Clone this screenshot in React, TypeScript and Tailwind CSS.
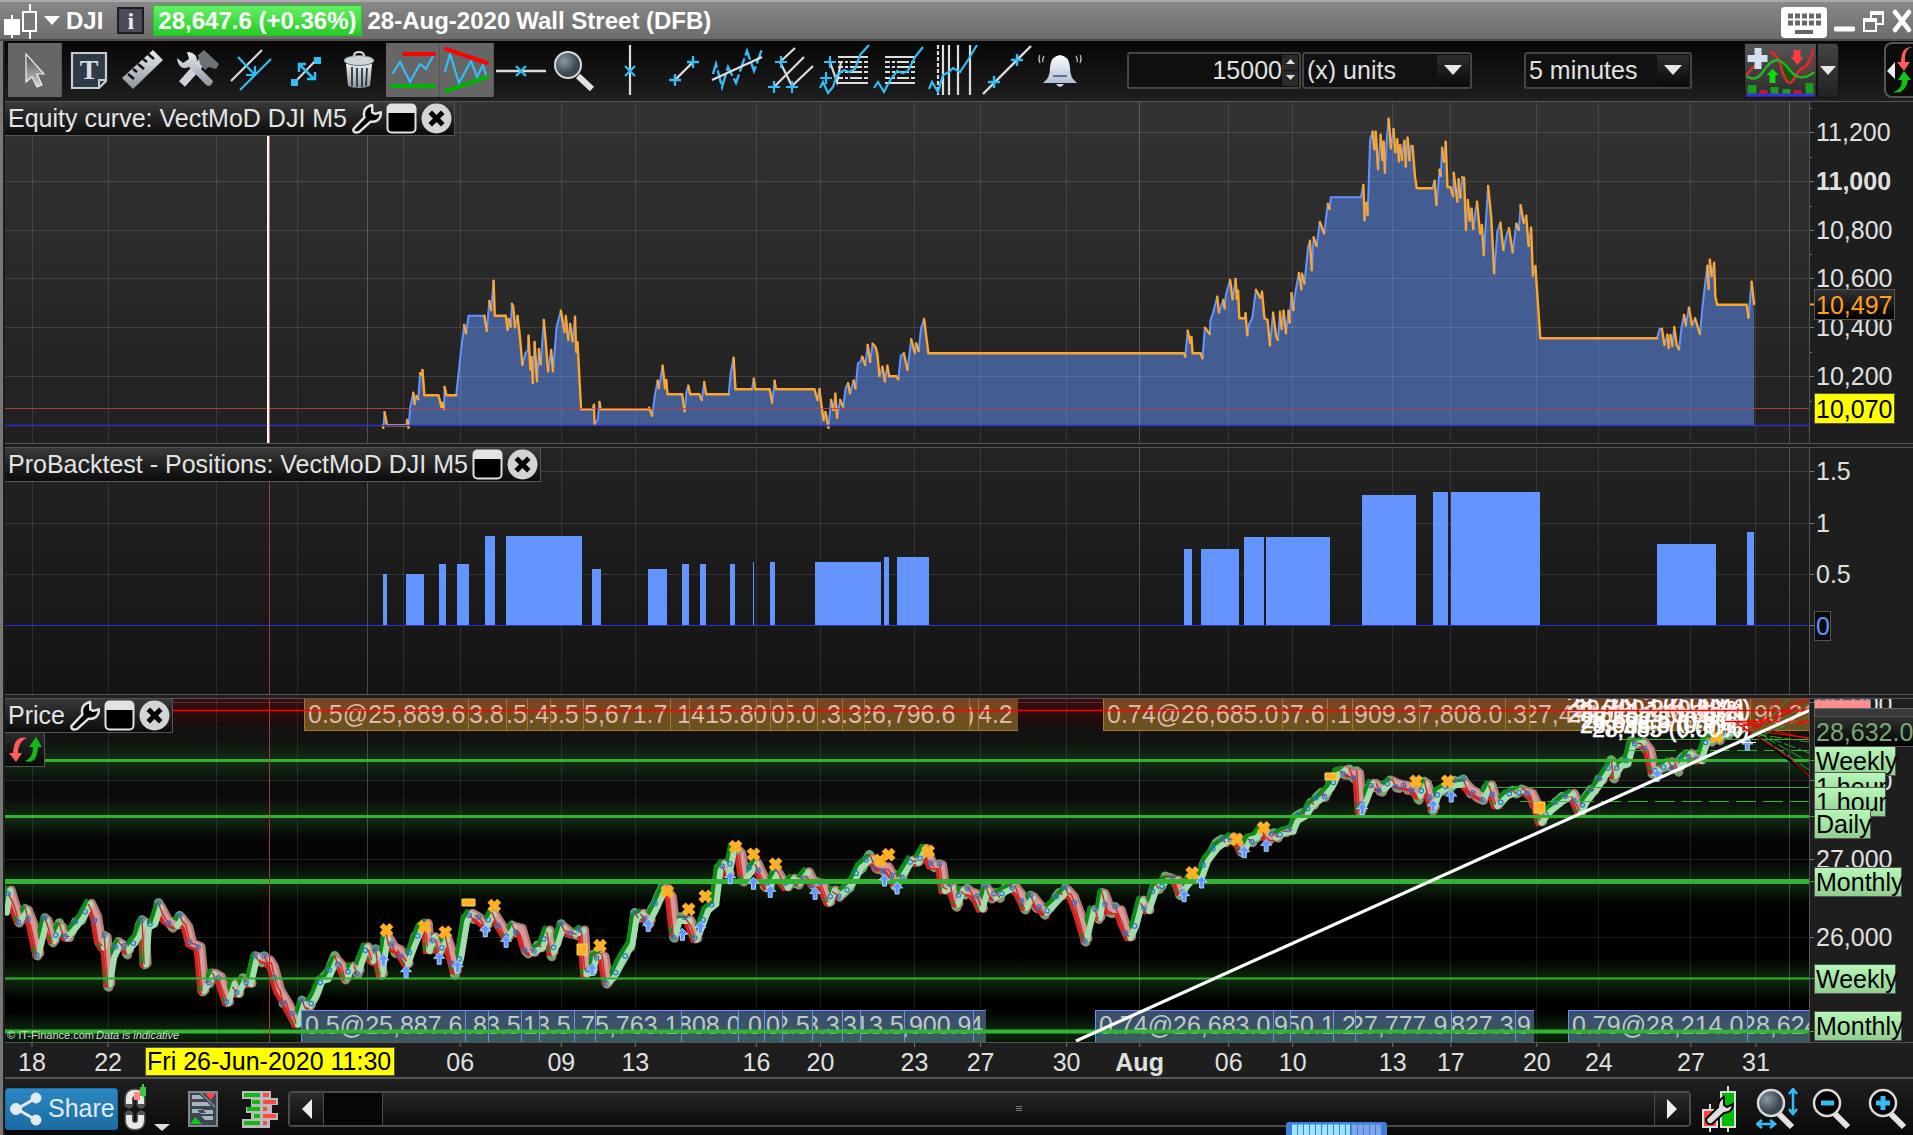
import type { ReactNode } from 'react';

const FONT = 'font-["Liberation_Sans",Arial,sans-serif]';

const X0 = 5;
const PLOT_W = 1804;

const pct = (x: number) => `${((x - X0) / PLOT_W) * 100}%`;
const pctW = (w: number) => `${(w / PLOT_W) * 100}%`;

type Pt = [number, number];

// "x,y;x,y" samples, scaled from recorded units to chart units
const parse = (raw: string, ox: number, kx: number, oy: number): Pt[] =>
  raw.split(';').map((p) => {
    const [x, y] = p.split(',').map(Number);
    return [+(ox + x / kx).toFixed(1), +(oy + y / 3).toFixed(1)];
  });

const EQUITY: Pt[] = [
  ...parse('625,556;626,563;628,517;632,556;663,556;665,540;667,563;670,500;675,458;677,492;680,468;683,478;686,400;688,405;690,390;693,466;716,466;721,502;722,488;725,507;726,441;729,466;745,466;753,330;758,255;761,280;765,227;791,227;795,273;799,183;802,210;806,122;808,227;826,227;829,270;831,237;834,260;836,191;838,199;841,262;845,228;849,290;853,375;858,340;862,330;863,287;866,388;868,352;870,430;873,306;877,424;880,328;883,373;888,240;891,300;895,394;900,330;903,394;909,260;916,212;922,276;924,228;928,300;931,252;935,304;939,230;941,335;943,307;949,508;967,508;970,494;971,552;976,540;979,486;981,508;1058,508;1060,503;1065,527;1069,470;1074,422;1076,445;1082,377;1086,445;1088,420;1090,463;1114,463;1118,514;1121,455;1124,437;1127,463;1142,463;1146,480;1150,426;1153,463;1190,463;1193,400;1198,353;1201,448;1228,448;1231,416;1233,448;1257,448;1261,488;1265,422;1267,448;1330,448;1335,480;1338,447;1341,490;1345,540;1348,516;1353,563;1357,480;1361,510;1364,461;1367,533;1372,480;1377,500;1381,443;1385,430;1388,460;1394,422;1397,445;1401,370;1405,365;1408,350;1413,375;1417,315;1421,365;1425,311;1430,322;1433,345;1436,408;1441,380;1445,424;1449,377;1452,409;1464,409;1467,418;1471,347;1476,340;1482,390;1488,298;1494,338;1496,310;1500,333;1504,265;1509,237;1512,280;1516,340', 0, 1.633, 240),
  ...parse('0,760;381,760;383,770;387,692;391,728;393,711;395,760;408,760;411,775;415,683;418,690;423,702;424,661;428,640;435,590;438,637;445,600;447,625;449,585;456,540;460,598;465,537;467,597;469,572;471,655;480,655;481,640;484,706;487,672;492,655;498,569;505,593;508,575;512,655;517,660;521,736;526,638;531,710;534,720;537,635;540,687;543,632;547,700;551,632;553,668;556,580;559,630;561,590;568,519;572,568;573,521;577,550;583,440;586,422;589,511;592,412;597,438;602,366;609,400;615,312;618,327;620,292;669,292;673,255;675,361;678,308;680,345;684,120;688,95;691,148;693,95;697,208;701,104;704,180;706,125;708,218;711,120;714,56;718,145;722,87;725,157;728,118;731,184;733,136;736,180;738,135;740,122;742,200;745,113;748,181;750,138;753,138;757,230;760,265;785,265;789,242;792,315;797,209;799,227;801,143;804,185;807,125;810,262;815,262;819,288;820,218;826,305;828,238;831,293;834,232;837,233;840,390;843,300;846,362;849,326;852,387;855,340;858,305;863,400;866,375;869,466;876,258;881,350;886,520;891,395;896,368;901,450;906,405;910,385;916,457;922,371;926,390;929,316;934,368;938,347;942,438;946,383;949,527;953,498;961,715;1151,715;1155,688;1159,686;1163,734;1168,704;1170,744;1173,705;1176,738;1179,681;1183,735;1187,748;1191,680;1195,645;1198,676;1203,623;1208,675;1213,655;1221,702;1225,620;1228,572;1233,497;1235,567;1237,479;1240,528;1244,488;1246,590;1249,614;1297,614;1300,653;1305,545;1309,612', 950, 1.628, 100),
];

const PRICE: Pt[] = [
  ...parse('12,665;20,600;30,640;45,690;62,660;75,700;90,790;110,690;128,750;145,710;160,740;185,705;200,680;217,640;232,680;240,745;250,770;255,740;264,880;275,800;290,760;310,780;335,740;348,695;353,820;360,710;375,700;388,650;405,690;430,705;440,685;455,710;465,760;485,770;495,900;520,850;535,860;555,935;570,880;580,910;595,870;610,880;625,800;655,810;665,830;680,900;700,940;725,1000;740,940;755,945;770,915;785,870;800,865;820,810;835,830;845,860;860,830;875,840;895,770;910,810;920,790;932,850;945,740;960,770;975,780;995,820;1010,770;1030,710;1042,700;1047,780;1060,740;1075,780;1090,745;1100,780;1113,840;1125,800;1140,690;1150,670;1165,680;1188,705;1205,670;1220,700;1240,740;1255,710;1272,715;1285,770;1300,785;1325,770;1340,720;1350,785;1362,760;1375,710;1390,725;1405,730;1425,720;1432,850;1450,840;1455,800;1468,795', 0, 2.45, 690),
  ...parse('5,800;15,875;30,860;55,800;75,760;85,680;100,670;118,690;135,650;155,595;170,620;180,730;190,690;215,690;232,745;245,710;260,660;280,640;290,540;300,520;312,550;325,470;340,490;350,570;365,545;380,520;395,560;410,590;430,550;455,590;470,565;485,575;505,545;520,580;540,580;558,635;570,600;585,615;605,590;620,570;635,530;660,505;680,530;700,530;722,580;740,550;760,510;775,515;793,475;810,525;832,525;840,600;858,590;872,640;885,600;915,610;932,655;945,600;965,620;985,605;1010,590;1025,610;1040,650;1055,620;1075,650;1088,665;1110,640;1140,600;1155,620;1170,670;1188,745;1205,660;1220,680;1230,610;1245,660;1270,660;1280,700;1295,740;1310,700;1325,630;1340,660;1360,590;1385,570;1410,570;1420,605;1445,570;1470,560;1485,510;1510,470;1545,440;1560,450', 600, 2.45, 690),
  ...parse('2,480;10,470;20,445;35,440;50,415;60,440;80,440;100,425;120,420;130,390;150,375;165,345;190,320;210,290;225,250;240,240;255,250;272,250;278,360;290,330;305,280;330,295;350,275;375,285;400,290;415,315;430,280;448,350;460,305;485,285;520,280;535,300;565,320;580,285;595,345;620,315;650,300;675,310;690,350;698,395;720,360;750,330;772,310;790,365;805,330;830,290;850,250;865,220;870,255;885,225;900,220;912,160;935,155;950,180;960,240;980,230;1000,215;1020,230;1045,190;1070,210;1085,150;1110,140;1130,130;1150,120;1180,112', 1240, 2.33, 690),
];

const CROSSES: Pt[] = [
  ...parse('947,720;1040,710;1091,727;1211,647;1470,767', 0, 2.45, 690),
  ...parse('165,604;217,658;258,619;332,470;376,493;430,523;686,511;707,494;804,484;1451,549;1560,448', 600, 2.45, 690),
  ...parse('55,414;410,274;484,274;1110,140', 1240, 2.33, 690),
];
const ARROWS: Pt[] = [
  ...parse('939,810;995,845;1076,805;1121,830;1189,722;1240,754;1451,838', 0, 2.45, 690),
  ...parse('118,706;202,733;246,712;319,563;376,580;417,604;527,610;697,570;728,594;1431,617;1474,576', 600, 2.45, 690),
  ...parse('10,485;61,466;285,356;450,347;492,318;972,256;1182,162', 1240, 2.33, 690),
];

const DAYS: { x: number; label?: string; bold?: boolean }[] = [
  { x: 32, label: '18' }, { x: 108, label: '22' }, { x: 216 }, { x: 297 },
  { x: 367, bold: true }, { x: 403 }, { x: 460, label: '06' }, { x: 561, label: '09' },
  { x: 635, label: '13' }, { x: 756, label: '16' }, { x: 820, label: '20' },
  { x: 914, label: '23' }, { x: 980, label: '27' }, { x: 1066, label: '30' },
  { x: 1139, label: 'Aug', bold: true }, { x: 1228, label: '06' }, { x: 1292, label: '10' },
  { x: 1392, label: '13' }, { x: 1450, label: '17' }, { x: 1536, label: '20' },
  { x: 1598, label: '24' }, { x: 1690, label: '27' }, { x: 1755, label: '31' },
  { x: 1789, bold: true },
];

const BARS: [number, number, number][] = [
  [383, 387, 574], [406, 424, 574], [439, 446, 564], [457, 469, 564], [485, 495, 536],
  [506, 582, 536], [592, 601, 569], [648, 667, 569], [682, 689, 564], [700, 706, 564],
  [730, 735, 564], [753, 754, 562], [770, 775, 562], [815, 881, 562], [884, 889, 557],
  [897, 929, 557], [1184, 1192, 549], [1201, 1239, 549], [1244, 1264, 537], [1266, 1330, 537],
  [1362, 1416, 495], [1433, 1448, 492], [1451, 1540, 492], [1657, 1716, 544], [1747, 1754, 532],
];

// one run of order labels: [left edge, text start, text] and the right end
type Order = [number, number, string];
const SELLS: { end: number; cells: Order[] }[] = [
  { end: 1018, cells: [
    [304, 4, '0.5@25,889.6'], [468, 1, '3.8'], [506, 0, '.5'], [527, 1, '.4'], [550, -6, '5.5'],
    [583, 1, '5,671.7'], [670, 7, '1'], [689, 2, '415.80'], [756, -3, '0'], [770, 1, '0'],
    [787, -6, '5.0'], [817, 3, '.3'], [842, -1, '.3'], [864, -6, '26,796.6'], [969, -3, ')'], [978, 0, '4.2'],
  ] },
  { end: 1812, cells: [
    [1103, 4, '0.74@26,685.0'], [1282, -6, '67.6'], [1327, 3, '.1'], [1352, 2, '909.3'],
    [1419, 0, '7,808.0'], [1505, 1, '.3'], [1529, -5, '27,471.0'], [1655, 4, '28,4'], [1750, 4, '90.21'],
  ] },
];
const BUYS: { end: number; cells: Order[] }[] = [
  { end: 986, cells: [
    [301, 4, '0.5@25,887.6'], [465, 1, '.8'], [488, -2, '3.5'], [521, 2, '1'], [539, -3, '3.5'], [574, 0, '.7'],
    [595, 0, '5,763.1'], [681, -3, '808.0'], [738, 3, '.0'], [764, 2, '0'], [782, -7, '2.5'], [812, -7, '8.3'],
    [842, 1, '3'], [860, -5, '13.5'], [904, -2, ',900.9'], [973, -4, '4'],
  ] },
  { end: 1534, cells: [
    [1095, 4, '0.74@26,683.0'], [1273, 1, '9'], [1290, -4, '50.1'], [1333, 2, '.2'],
    [1355, -5, '27,777.9'], [1451, 0, '827.3'], [1515, 2, '9'],
  ] },
  { end: 1812, cells: [[1568, 4, '0.79@28,214.0'], [1747, -5, '28,624']] },
];

const LEVELS: [number, number][] = [[760, 3], [816, 3], [881, 5], [978, 2], [1031, 4]];

function split(points: Pt[]) {
  let up = '';
  let down = '';
  let rising = false;
  for (let i = 1; i < points.length; i++) {
    const [ax, ay] = points[i - 1];
    const [bx, by] = points[i];
    if (by !== ay) rising = by < ay;
    const seg = `M${ax} ${ay}L${bx} ${by}`;
    if (rising) up += seg;
    else down += seg;
  }
  return { up, down };
}

// fills in the small wiggles between recorded samples
function wiggle(points: Pt[]): Pt[] {
  const out: Pt[] = [];
  let seed = 7;
  const rnd = () => {
    seed = (seed * 16807) % 2147483647;
    return seed / 2147483647 - 0.5;
  };
  for (let i = 0; i < points.length - 1; i++) {
    const [ax, ay] = points[i];
    const [bx, by] = points[i + 1];
    const n = Math.max(1, Math.round((bx - ax) / 3));
    for (let k = 0; k < n; k++) {
      const t = k / n;
      out.push([ax + (bx - ax) * t, ay + (by - ay) * t + rnd() * 9]);
    }
  }
  out.push(points[points.length - 1]);
  return out;
}

const EQ = split(EQUITY);
const TREND = split(PRICE);
const NOISE = wiggle(PRICE);
const FAST = split(NOISE);
const DOTS = NOISE.filter((_, i) => i % 3 === 1);

function Shapes({ y, h, children }: { y: number; h: number; children: ReactNode }) {
  return (
    <svg x="0" y="0" width="100%" height={h} viewBox={`${X0} ${y} ${PLOT_W} ${h}`} preserveAspectRatio="none">
      {children}
    </svg>
  );
}

function Grid({ y, h, rows }: { y: number; h: number; rows: number[] }) {
  return (
    <g shapeRendering="crispEdges" stroke="#fff">
      {DAYS.map((d) => (
        <path key={d.x} d={`M${d.x + 0.5} ${y}v${h}`} strokeOpacity={d.bold ? 0.22 : 0.1} />
      ))}
      {rows.map((r) => (
        <path key={r} d={`M${X0} ${r + 0.5}h${PLOT_W}`} strokeOpacity={0.12} />
      ))}
    </g>
  );
}

function OrderRow({ rows, y, kind }: { rows: typeof SELLS; y: number; kind: 'sell' | 'buy' }) {
  const sell = kind === 'sell';
  const edge = sell ? '#a9782c' : '#6495ed';
  return (
    <>
      {rows.map(({ end, cells }) =>
        cells.map(([x, dx, text], i) => {
          const right = i + 1 < cells.length ? cells[i + 1][0] : end;
          return (
            <svg key={x} x={pct(x)} y={y} width={pctW(right - x)} height="32">
              <rect width="100%" height="32" fill={sell ? 'url(#sell)' : 'url(#buy)'} />
              <text x={dx} y={sell ? 24 : 24} fontSize="25" fill={sell ? '#dcb9a6' : '#bccbc4'}>{text}</text>
              <path d="M.5 0v32" stroke={edge} />
              <path d={sell ? 'M0 31.5h600' : 'M0 .5h600'} stroke={edge} />
            </svg>
          );
        }),
      )}
    </>
  );
}

function WrenchIcon() {
  return (
    <svg width="31" height="31" viewBox="0 0 30 30">
      <path
        d="M2.500 25 13 14C11.500 8.500 13.500 3.500 20.500 2v7l3 1.500L29 9c0 7-4.500 10-10 9L8 28c-3.500 1.500-6.500 0-5.500-3z"
        fill="#000" stroke="#e2e2e2" strokeWidth="2.400" strokeLinejoin="round"
      />
    </svg>
  );
}

function PanelTitle({ title, wrench }: { title: string; wrench?: boolean }) {
  return (
    <div className="absolute left-0 top-0 flex h-[34px] items-center gap-1 border-r border-b border-[#555] bg-linear-to-b from-[#3a3a3a] to-[#0c0c0c] pr-[2px] pl-[3px]">
      <h2 className="text-[25px] leading-none whitespace-nowrap text-[#e4e4e4]">{title}</h2>
      {wrench && (
        <button aria-label={`${title} settings`}><WrenchIcon /></button>
      )}
      <button aria-label={`Detach ${title}`}>
        <svg width="31" height="31" viewBox="0 0 31 31">
          <rect x="1.500" y="1.500" width="28" height="28" rx="4" fill="#000" stroke="#e2e2e2" strokeWidth="2" />
          <path d="M2 10V5q0-3 3-3h21q3 0 3 3v5z" fill="#e2e2e2" />
        </svg>
      </button>
      <button aria-label={`Close ${title}`}>
        <svg width="31" height="31" viewBox="0 0 31 31">
          <circle cx="15.500" cy="15.500" r="15" fill="#d4d4d4" />
          <path d="m11 11 9 9m0-9-9 9" stroke="#000" strokeWidth="5" strokeLinecap="square" />
        </svg>
      </button>
    </div>
  );
}

function AxisText({ y, children, bold }: { y: number; children: string; bold?: boolean }) {
  return (
    <text x="6" y={y + 9} fontSize="25" fontWeight={bold ? 700 : 400} fill="#e0e0e0">{children}</text>
  );
}

function AxisTag({ y, w, label }: { y: number; w: number; label: string }) {
  return (
    <g>
      <rect x="4.500" y={y + 0.5} width={w} height="29" fill="url(#tag)" stroke="#555" />
      <text x="6" y={y + 24} fontSize="25" fill="#000">{label}</text>
    </g>
  );
}

const CYAN = '#33bdf7';
const PALE = '#dcdcdc';

const plus = (x: number, y: number) => `M${x - 6} ${y}h12M${x} ${y - 6}v12`;

const TOOLS: { name: string; on?: boolean; art: ReactNode }[] = [
  { name: 'Pointer', on: true, art: <path d="M18 11v28l6-5 5 10 5-2-5-11h7z" fill="url(#pointer)" stroke="#eee" strokeWidth="1.200" /> },
  { name: 'Text', art: (
    <g>
      <path d="M10 10h34v28l-7 7H10z" fill="#2f3a46" stroke="#c3ccd4" strokeWidth="2.200" />
      <path d="M44 37h-7v8" fill="none" stroke="#c3ccd4" strokeWidth="2" />
      <text x="27" y="36" textAnchor="middle" fontSize="28" fontWeight="700" fontFamily="Liberation Serif" fill="#d5dde4">T</text>
    </g>
  ) },
  { name: 'Ruler', art: (
    <g>
      <path d="M37 7 47 17 17 46 6 35z" fill="url(#steel)" />
      <path d="m12 31 6 5m-1-10 4 3m1-8 6 5m-1-10 4 3m1-8 6 5" stroke="#111" strokeWidth="2.500" />
    </g>
  ) },
  { name: 'Settings', art: (
    <g>
      <path d="m12 41 24-27" stroke="#cdd3d8" strokeWidth="8" />
      <path d="m28 12 6-5 15 14-3 5-7-2-4 3-5-6z" fill="#6c7378" />
      <path d="M7 15c1 9 6 12 12 9l17 18q5 3 7-4L26 21c3-6-1-12-9-12l2 7-6 4z" fill="url(#steel)" />
    </g>
  ) },
  { name: 'Parallel lines', art: (
    <g fill="none" strokeWidth="2.200">
      <path d="m7 38 31-31" stroke={PALE} />
      <path d="m16 47 31-31M14 14l17 18m0-9v9h-9" stroke={CYAN} />
    </g>
  ) },
  { name: 'Move segment', art: (
    <g>
      <path d="m17 39 23-24" stroke={PALE} strokeWidth="2" />
      <path d="m21 21 15 15m-15-7v-8h7m9 8v7h-8" stroke={CYAN} strokeWidth="2.500" fill="none" />
      <path d="M13 36h7v7h-7zM36 14h7v7h-7z" fill={CYAN} />
    </g>
  ) },
  { name: 'Delete', art: (
    <g>
      <path d="M14 21h26l-2 22q-11 4-22 0z" fill="url(#steel)" />
      <path d="M20 24v19m5-18v19m5-19v19m5-19-1 18" stroke="#30363b" strokeWidth="1.800" />
      <ellipse cx="27" cy="17.500" rx="15" ry="5" fill="#cfd6da" stroke="#6d7479" />
      <path d="M22 13q0-4 5-4t5 4" fill="none" stroke="#cfd6da" strokeWidth="2" />
    </g>
  ) },
  { name: 'Support and resistance', on: true, art: (
    <g fill="none" strokeLinecap="round">
      <path d="m7 30 7-11 10 20 10-18 6 5 7-13" stroke={CYAN} strokeWidth="2.200" />
      <path d="M18 11h30" stroke="red" strokeWidth="4" />
      <path d="M6 43h42" stroke="#00b400" strokeWidth="4" />
    </g>
  ) },
  { name: 'Trend lines', on: true, art: (
    <g fill="none" strokeLinecap="round">
      <path d="m5 28 5-17 9 29 12-22 6 16 6-12 3 10" stroke={CYAN} strokeWidth="2.200" />
      <path d="m6 6 41 14" stroke="red" strokeWidth="4" />
      <path d="m6 48 41-14" stroke="#00b400" strokeWidth="4" />
    </g>
  ) },
  { name: 'Horizontal line', art: (
    <g strokeWidth="2.400">
      <path d="M2 28h50" stroke={PALE} />
      <path d="m22 23 10 10m0-10-10 10" stroke={CYAN} />
    </g>
  ) },
  { name: 'Zoom', art: (
    <g>
      <path d="m30 33 14 13" stroke="#e3e3e3" strokeWidth="6" />
      <circle cx="20" cy="22" r="13" fill="url(#lens)" stroke="#d9d9d9" strokeWidth="2" />
    </g>
  ) },
  { name: 'Vertical line', art: (
    <g strokeWidth="2.200">
      <path d="M28 2v50" stroke={PALE} />
      <path d="m23 23 10 10m0-10-10 10" stroke={CYAN} />
    </g>
  ) },
  { name: 'Segment', art: (
    <g strokeWidth="2.400">
      <path d="m19 37 18-18" stroke={PALE} />
      <path d={plus(19, 37) + plus(37, 19)} stroke={CYAN} />
    </g>
  ) },
  { name: 'Regression', art: (
    <g fill="none" strokeWidth="2.400">
      <path d="m3 31 3-10 6 23 6-20 8 16 11-32 7 20 8-22" stroke={CYAN} strokeDasharray="14 3" />
      <path d="m2 37 50-23" stroke={PALE} />
    </g>
  ) },
  { name: 'Pitchfork', art: (
    <g strokeWidth="2.200">
      <path d="M16 19 31 5M11 43l29-29M28 43l21-20M16 19l12 24" stroke={PALE} />
      <path d={plus(17, 19) + plus(10, 44) + plus(28, 44)} stroke={CYAN} />
    </g>
  ) },
  { name: 'Fibonacci expansion', art: (
    <g fill="none" strokeWidth="2.200">
      <path d="M20 14h30M19 40h31m-38-21 7 20 4-20" stroke={PALE} />
      <path d="M20 19h30M20 24h30M20 29h30M20 35h30" stroke={PALE} strokeDasharray="5 2 3 2 12 2" />
      <path d="m2 45 3-6 5 11 5-6 4-12 7-5 5 2 6-3 5-14 9-10" stroke={CYAN} />
      <path d={plus(12, 19) + plus(8, 35)} stroke={CYAN} />
    </g>
  ) },
  { name: 'Fibonacci retracement', art: (
    <g fill="none" strokeWidth="2.200">
      <path d="M13 14h30M13 40h30" stroke={PALE} />
      <path d="M13 19h30M13 24h30M13 29h30M13 35h30" stroke={PALE} strokeDasharray="5 2 3 2 12 2" />
      <path d="m2 45 4-6 6 10 4-8 3-5 6-8 6 2 5-2 7-14 8-10" stroke={CYAN} />
    </g>
  ) },
  { name: 'Time zones', art: (
    <g fill="none" strokeWidth="2.200">
      <path d="M12 2v50" stroke={PALE} strokeDasharray="4 2" />
      <path d="M17 2v50M23 2v50M32 2v50M44 2v50" stroke={PALE} />
      <path d="m3 46 3-7 6 10 5-17 6-3 4-4 7 4 8-12 9-15" stroke={CYAN} />
    </g>
  ) },
  { name: 'Line', art: (
    <g strokeWidth="2.400">
      <path d="M3 51 51 3" stroke={PALE} />
      <path d={plus(14, 39) + plus(37, 17)} stroke={CYAN} />
    </g>
  ) },
  { name: 'Alerts', art: (
    <g>
      <path d="M26 12q9 1 10 12 0 8 3 12l4 4H9l4-4q3-4 3-12 1-11 10-12z" fill="url(#bell)" />
      <path d="M22 41q4 6 8 0z" fill="#c8d4e4" />
      <path d="M19 33h14" stroke="#4a525c" strokeWidth="1.500" />
      <path d="M10 13q-2 3-1 6m-3-7q-2 3 0 8m36-7q2 3 1 6m3-7q2 3 0 8" stroke="#bfc8d0" fill="none" strokeWidth="1.300" />
    </g>
  ) },
];

function SwapArrows() {
  return (
    <svg width="34" height="28" viewBox="0 0 34 28">
      <path d="M19 2Q6-1 5 17H1l7 9 6-9h-4Q10 5 19 2z" fill="#ff5c5c" />
      <path d="M17 25q12 4 13-14h4L28 1l-7 10h4q0 11-8 14z" fill="#15b815" />
    </svg>
  );
}

function TitleBar() {
  return (
    <header className="flex h-[41px] items-center border-t-2 border-b-2 border-t-[#aaa] border-b-[#4a4a4a] bg-linear-to-b from-[#888] to-[#6c6c6c] pl-1 text-[24px] leading-none font-bold whitespace-nowrap text-white">
      <svg width="34" height="36" viewBox="0 0 34 36" stroke="#fff" strokeWidth="2">
        <path d="M8 12v23M26 1v35" />
        <path d="M1 17h14v14H1z" fill="#fff" />
        <path d="M19 9h13v19H19z" fill="#7a7a7a" />
      </svg>
      <button aria-label="Choose instrument" className="mx-1.5">
        <svg width="16" height="10" viewBox="0 0 16 10"><path d="M0 0h16L8 9z" fill="#fff" /></svg>
      </button>
      <h1>DJI</h1>
      <button aria-label="Information" className="ml-3.5 flex h-[27px] w-[27px] items-center justify-center border-2 border-[#1c1c24] bg-[#4b4b58] font-['Liberation_Serif',serif] text-[24px] text-[#e8e8ee]">i</button>
      <span className="ml-[9px] flex h-[31px] items-center justify-center border border-[#1ec81e] bg-linear-to-b from-[#62f062] to-[#25cb25] px-1">28,647.6 (+0.36%)</span>
      <span className="ml-[6px]">28-Aug-2020</span>
      <span className="ml-[6px]">Wall Street (DFB)</span>
      <div className="ml-auto flex items-center gap-[7px]">
        <button aria-label="Keyboard" className="pt-1">
          <svg width="46" height="31" viewBox="0 0 46 31">
            <rect width="46" height="31" rx="4" fill="#fff" />
            <path d="M7 9h33M7 16h33" stroke="#666" strokeWidth="5" strokeDasharray="5 2" />
            <path d="M14 25h18" stroke="#666" strokeWidth="4" />
          </svg>
        </button>
        <button aria-label="Minimize"><svg width="21" height="24" viewBox="0 0 21 24"><path d="M2 20h17" stroke="#fff" strokeWidth="5" strokeLinecap="round" /></svg></button>
        <button aria-label="Restore">
          <svg width="22" height="24" viewBox="0 0 22 24" fill="#777" stroke="#fff" strokeWidth="2">
            <path d="M9 3h12v12H9zM9 5h12" />
            <path d="M2 10h12v12H2zM2 12h12" />
          </svg>
        </button>
        <button aria-label="Close window"><svg width="22" height="24" viewBox="0 0 22 24"><path d="m4 3 14 18m0-18L4 21" stroke="#fff" strokeWidth="4.500" strokeLinecap="round" /></svg></button>
      </div>
    </header>
  );
}

function Dropdown({ label, value, className }: { label: string; value: string; className: string }) {
  return (
    <div className={`relative h-[37px] rounded-[3px] border-2 border-[#454545] bg-[#111] ${className}`}>
      <select aria-label={label} defaultValue={value} className="h-full w-full appearance-none bg-transparent pl-[3px] text-[25px] leading-none text-[#e0e0e0] outline-none">
        <option>{value}</option>
      </select>
      <span className="pointer-events-none absolute inset-y-px right-px flex w-8 items-center justify-center bg-linear-to-b from-[#2e2e2e] to-[#0b0b0b]">
        <svg width="18" height="10" viewBox="0 0 18 10"><path d="M0 0h18L9 10z" fill="#e6e6e6" /></svg>
      </span>
    </div>
  );
}

function Toolbar() {
  return (
    <div className="flex h-[60px] items-center bg-linear-to-b from-[#070707] to-[#1f1f1f] pb-[2px] pl-[3px]">
      {TOOLS.map((t) => (
        <button key={t.name} aria-label={t.name} aria-pressed={!!t.on} className={`h-[54px] w-[54px] shrink-0 ${t.on ? 'border-r border-[#555] bg-[#666]' : ''}`}>
          <svg width="54" height="54" viewBox="0 0 54 54">{t.art}</svg>
        </button>
      ))}
      <div className="ml-[39px] flex h-[37px] w-[174px] shrink-0 rounded-[3px] border-2 border-[#454545] bg-[#0f0f0f] p-px">
        <input aria-label="Amount of data" defaultValue="15000" className="w-full min-w-0 bg-transparent text-right text-[25px] leading-none text-[#e0e0e0] outline-none" />
        <div className="flex w-4 flex-col gap-px">
          <button aria-label="More" className="flex h-4 w-4 items-center justify-center bg-[#2a2a2a]"><svg width="9" height="6" viewBox="0 0 9 6"><path d="M0 5h9L4.500 0z" fill="#ddd" /></svg></button>
          <button aria-label="Less" className="flex h-4 w-4 items-center justify-center bg-[#2a2a2a]"><svg width="9" height="6" viewBox="0 0 9 6"><path d="M0 0h9L4.500 5z" fill="#ddd" /></svg></button>
        </div>
      </div>
      <Dropdown label="Units" value="(x) units" className="ml-px w-[170px] shrink-0" />
      <Dropdown label="Timeframe" value="5 minutes" className="ml-[52px] w-[168px] shrink-0" />
      <div className="ml-auto flex items-center">
        <button aria-label="Add indicator" className="h-[55px] w-[73px] border border-[#111] bg-linear-to-b from-[#555] to-[#2c2c2c]">
          <svg width="71" height="53" viewBox="0 0 70 53">
            <path d="M24 8q6 0 10 8 9 22 12 22 4 0 10-12 8-6 12-20v18q-8 10-18 6-8-18-20-12z" fill="#9a3a3a" fillOpacity=".45" />
            <path d="M30 15q12 1 18 14-3 14-7 7-3-12-11-21z" fill="#0a5c0a" />
            <path d="M1 31q6-8 12-12M24 8q8-1 13 20 6 18 12 6 3-8 10-11 6-5 9-18" fill="none" stroke="#e02a2a" strokeWidth="2.500" />
            <path d="M1 32q9 7 17-5 9-14 17-10 6 4 10 10 10 12 24 1" fill="none" stroke="#22b422" strokeWidth="2.500" />
            <path d="M9 4h7v7h6v7h-6v7H9v-7H2v-7h7z" fill="#d5dfee" />
            <path d="M48 6h7v7h3l-6 8-7-8h3z" fill="#ff3b3b" />
            <path d="m27 25 6 6h-3v8h-6v-8h-3z" fill="#0edc0e" />
            <path d="M2 41h9v9H2zM25 43h8v7h-8zM37 45h8v5h-8zM60 39h8v11h-8z" fill="#1a9e1a" />
            <path d="M14 46h8v4h-8zM48 46h8v4h-8z" fill="#c02020" />
            <path d="M1 51h68" stroke="#3030e8" strokeWidth="3" />
          </svg>
        </button>
        <button aria-label="Indicator menu" className="flex h-[55px] w-[22px] items-center justify-center rounded-r-sm border border-[#111] bg-linear-to-b from-[#444] to-[#222]">
          <svg width="16" height="9" viewBox="0 0 16 9"><path d="M0 0h16L8 9z" fill="#e6e6e6" /></svg>
        </button>
        <button aria-label="Trading panel" className="ml-[45px] flex h-[56px] w-[29px] items-center overflow-hidden rounded-l-lg border-2 border-r-0 border-[#555] bg-[#0c0c0c]">
          <svg width="27" height="52" viewBox="0 0 27 52">
            <path d="M9 18v17L1 27z" fill="#eee" />
            <path d="M27 3q-9 1-8 15h5l-6 9-7-9h4Q15 2 27 3z" fill="#ff5c5c" />
            <path d="M7 48q12 3 15-12h3l-7-9-6 9h4q0 10-9 12z" fill="#12c512" />
          </svg>
        </button>
      </div>
    </div>
  );
}

function EquityChart() {
  const area = `M${EQUITY[0][0]} 425L${EQUITY.map((p) => p.join(' ')).join('L')}V425z`;
  return (
    <section className="flex h-[343px] border-y border-[#555]">
      <div className="relative flex-1 border-r border-[#555] bg-linear-to-b from-[#333] to-[#202020]">
        <svg width="100%" height="341" className="block">
          <Shapes y={102} h={341}>
            <path d={area} fill="#435d92" />
            <Grid y={101} h={343} rows={[132, 181, 230, 278, 327, 376]} />
            <path d={EQ.up} stroke="#6495ff" strokeWidth="2" strokeLinecap="round" fill="none" />
            <path d={EQ.down} stroke="#ffa628" strokeWidth="2.400" strokeLinecap="round" fill="none" />
            <path d="M5 425.500h1804" stroke="#3030c8" strokeWidth="1.500" />
            <path d="M5 408.500h1804" stroke="#c04040" strokeOpacity=".85" />
            <path d="M268 101v343" stroke="#fff" strokeWidth="2" />
            <path d="M269.500 101v343" stroke="#e06060" />
          </Shapes>
        </svg>
        <PanelTitle title="Equity curve: VectMoD DJI M5" wrench />
      </div>
      <svg width="103" height="341" viewBox="0 102 103 341" className="block bg-[#1e1e1e]">
        <path d="M0 108.500h2M0 132.500h4M0 157.500h2M0 181.500h4M0 206.500h2M0 230.500h4M0 254.500h2M0 278.500h4M0 327.500h4M0 352.500h2M0 376.500h4M0 401.500h2" stroke="#777" />
        <AxisText y={132}>11,200</AxisText>
        <AxisText y={181} bold>11,000</AxisText>
        <AxisText y={230}>10,800</AxisText>
        <AxisText y={278}>10,600</AxisText>
        <AxisText y={327}>10,400</AxisText>
        <AxisText y={376}>10,200</AxisText>
        <path d="M0 304.500h4" stroke="#ffa628" strokeWidth="2" />
        <rect x="4.500" y="289.500" width="80" height="30" fill="url(#dark)" stroke="#555" />
        <text x="6" y="314" fontSize="25" fill="#ffa020">10,497</text>
        <rect x="4.500" y="393.500" width="80" height="30" fill="#ff0" stroke="#555" />
        <text x="6" y="418" fontSize="25" fill="#000">10,070</text>
      </svg>
    </section>
  );
}

function PositionsChart() {
  return (
    <section className="mt-[3px] flex h-[248px] border-y border-[#555]">
      <div className="relative flex-1 border-r border-[#555] bg-linear-to-b from-[#232323] to-[#141414]">
        <svg width="100%" height="246" className="block">
          <Shapes y={448} h={246}>
            <Grid y={447} h={248} rows={[471, 523, 574]} />
            {BARS.map(([a, b, top]) => (
              <rect key={a} x={a} y={top} width={b - a} height={625 - top} fill="#6495ff" shapeRendering="crispEdges" />
            ))}
            <path d="M5 625.500h1804" stroke="#3030d8" />
            <path d="M269.500 447v248" stroke="#a03c3c" />
          </Shapes>
        </svg>
        <PanelTitle title="ProBacktest - Positions: VectMoD DJI M5" />
      </div>
      <svg width="103" height="246" viewBox="0 448 103 246" className="block bg-[#1e1e1e]">
        <path d="M0 471.500h4M0 523.500h4M0 574.500h4M0 625.500h4" stroke="#777" />
        <AxisText y={471}>1.5</AxisText>
        <AxisText y={523}>1</AxisText>
        <AxisText y={574}>0.5</AxisText>
        <rect x="4.500" y="611.500" width="16" height="29" fill="#0c0c0c" stroke="#555" />
        <text x="6" y="635" fontSize="25" fill="#6495ff">0</text>
      </svg>
    </section>
  );
}

function Candles() {
  return (
    <g fill="none" strokeLinecap="round" strokeLinejoin="round">
      <g strokeWidth="9">
        <path d={FAST.down} stroke="#b07474" transform="translate(1 1)" />
        <path d={FAST.up} stroke="#6aa870" transform="translate(0 0)" />
        <path d={TREND.down} stroke="#b07c7a" transform="translate(3 0)" />
      </g>
      <g strokeWidth="5">
        <path d={TREND.down} stroke="#d42420" transform="translate(-2 2)" />
        <path d={TREND.up} stroke="#0c8c14" transform="translate(-2 -2)" />
      </g>
      <g strokeWidth="6">
        <path d={TREND.down} stroke="#d89a98" transform="translate(2 0)" />
        <path d={TREND.up} stroke="#a4dcae" transform="translate(2 1)" />
      </g>
      <path d={FAST.down} stroke="#c83028" strokeWidth="1.500" />
      {DOTS.map(([x, y], i) => (
        <circle key={i} cx={x} cy={y} r="2.200" stroke="#2878d8" strokeWidth="1.200" />
      ))}
    </g>
  );
}

function Markers() {
  return (
    <g>
      {CROSSES.map(([x, y]) => (
        <path key={x} d={`M${x - 3} ${y - 3}l6 6m0-6l-6 6`} stroke="#ffb024" strokeWidth="5.500" strokeLinecap="square" />
      ))}
      {ARROWS.map(([x, y]) => (
        <path key={x} d={`M${x} ${y - 6}l5.500 6h-3.500v6h-4v-6h-3.500z`} fill="#6495ff" stroke="#a8d4ff" />
      ))}
      <path d="M462 899h13v7h-13zM577 944h10v11h-10zM1325 773h12v7h-12zM1534 802h11v11h-11z" fill="#ffb024" stroke="#ffd060" />
    </g>
  );
}

function PriceChart() {
  return (
    <section className="mt-[3px] flex h-[345px] border-y border-[#555]">
      <div className="relative flex-1 border-r border-[#555] bg-linear-to-b from-[#171717] to-black">
        <svg width="100%" height="343" className="block overflow-hidden">
          <Shapes y={699} h={343}>
            <rect x="5" y="699" width="1805" height="28" fill="url(#redglow)" />
            {LEVELS.map(([y]) => (
              <rect key={y} x="5" y={y - 20} width="1805" height="42" fill="url(#glow)" />
            ))}
            <Grid y={698} h={344} rows={[702, 780, 859, 937]} />
            <Candles />
          </Shapes>
          <OrderRow rows={SELLS} y={0} kind="sell" />
          <OrderRow rows={BUYS} y={311} kind="buy" />
          <Shapes y={699} h={343}>
            {LEVELS.map(([y, w]) => (
              <path key={y} d={`M5 ${y + 0.5}h1805`} stroke="#32b432" strokeWidth={w} />
            ))}
            <path d="M269.500 698v344" stroke="#a03c3c" />
            <path d="M1622 739.500h188M1495 787.500h315" stroke="#32b432" />
            <path d="M1629 750.500h181M1520 801.500h290" stroke="#32b432" strokeDasharray="20 7" />
            <Markers />
          </Shapes>
          <g fontSize="23" fill="#fff" stroke="#fff" strokeWidth=".6">
            <text x={pct(1567)} y="13">28,709.3 (0.00%)</text>
            <text x={pct(1574)} y="18" fill="#ffe0e0">29,790.2 (0.88%)</text>
            <text x={pct(1568)} y="23" fill="#ffd0d0">28,828.8 (0.00%)</text>
            <text x={pct(1581)} y="29">28,502.5 (0.8%)</text>
            <text x={pct(1580)} y="34">28,688.8 (0.8%)</text>
            <text x={pct(1592)} y="38">28,485 (0.00%)</text>
          </g>
          <Shapes y={699} h={343}>
            <path d="M5 710.500h1805M1725 721.500h85" stroke="red" strokeWidth="1.500" />
            <path d="M1735 726l75-4M1738 722l71 17M1740 726l70-18M1745 732l58-33M1750 736l60-38M1748 738l30-38M1735 722l55 36 19 18M1742 729l67 9" stroke="red" />
            <path d="M1750 730l59 40M1752 734l57-30M1755 734l54 8M1756 733l53 20M1750 741l38-42M1760 736l49-20M1752 730l57 32" fill="none" stroke="#28a028" strokeDasharray="12 3" />
            <path d="M1076 1041 1810 710" stroke="#fff" strokeWidth="3.200" />
            <path d="M1740 742.500h16" stroke="#fff" />
          </Shapes>
          <g fontSize="11" fill="#d8d8d8">
            <text x="2" y="340">© IT-Finance.com</text>
            <text x="91" y="340" fontStyle="italic">Data is indicative</text>
          </g>
        </svg>
        <PanelTitle title="Price" wrench />
        <button aria-label="Trade from chart" className="absolute left-0 top-[34px] flex h-[34px] w-10 items-center justify-center border-r border-b border-[#555] bg-linear-to-b from-[#2c2c2c] to-[#080808]">
          <SwapArrows />
        </button>
      </div>
      <svg width="103" height="343" viewBox="0 699 103 343" className="block bg-[#1e1e1e]">
        <path d="M0 702.500h4M0 780.500h4M0 859.500h4M0 937.500h4" stroke="#777" />
        <path d="M0 760.500h4M0 816.500h4M0 881.500h4M0 978.500h4M0 1031.500h4" stroke="#32b432" />
        <AxisText y={704}>29,000</AxisText>
        <AxisText y={781}>28,000</AxisText>
        <AxisText y={859}>27,000</AxisText>
        <AxisText y={937}>26,000</AxisText>
        <rect x="4.500" y="700" width="56" height="10" fill="#ff8f8f" stroke="#888" />
        <rect x="4.500" y="708.500" width="100" height="26" fill="#3a3a3a" stroke="#666" />
        <rect x="4.500" y="716.500" width="100" height="30" fill="url(#dark)" stroke="#555" />
        <text x="6" y="741" fontSize="25" fill="#78a878">28,632.0</text>
        <AxisTag y={746} w={81} label="Weekly" />
        <AxisTag y={772} w={71} label="1 hour" />
        <AxisTag y={787} w={71} label="1 hour" />
        <AxisTag y={809} w={56} label="Daily" />
        <AxisTag y={867} w={87} label="Monthly" />
        <AxisTag y={964} w={81} label="Weekly" />
        <AxisTag y={1011} w={87} label="Monthly" />
      </svg>
    </section>
  );
}

function DateAxis() {
  return (
    <div className="flex h-9 border-b-2 border-[#555] bg-[#1e1e1e]">
      <svg height="34" className="block flex-1 overflow-visible">
        {DAYS.filter((d) => d.label).map((d) => (
          <g key={d.x}>
            <line x1={pct(d.x)} x2={pct(d.x)} y1="0" y2="4" stroke="#777" />
            <text x={pct(d.x)} y="28" textAnchor="middle" fontSize="25" fontWeight={d.bold ? 700 : 400} fill="#e0e0e0">{d.label}</text>
          </g>
        ))}
        <svg x={pct(145)} y="4" width="250" height="30">
          <rect x=".5" y=".5" width="249" height="28" fill="#ff0" stroke="#555" />
          <text x="2" y="23" fontSize="25" fill="#000">Fri 26-Jun-2020 11:30</text>
        </svg>
      </svg>
      <div className="w-[103px]" />
    </div>
  );
}

function Lens({ children, plain }: { children?: ReactNode; plain?: boolean }) {
  return (
    <svg width="42" height="42" viewBox="0 0 42 42">
      <path d="m22 25 14 14" stroke="#e3e3e3" strokeWidth="6" />
      <circle cx="15" cy="15" r="13" fill={plain ? 'url(#lens)' : '#000'} stroke="#d9d9d9" strokeWidth="2.500" />
      {children}
    </svg>
  );
}

function BottomBar() {
  return (
    <footer className="relative flex h-[56px] items-center bg-linear-to-b from-[#1f1f1f] to-[#0a0a0a] pt-[3px]">
      <button className="flex h-[42px] w-[113px] items-center gap-[5px] rounded-[3px] border border-[#1a6ca6] bg-linear-to-b from-[#2c88c2] to-[#1b6ba3] pl-1 text-[25px] leading-none text-[#e4eaf0]">
        <svg width="33" height="34" viewBox="0 0 33 34" fill="#e4eaf0" stroke="#e4eaf0">
          <path d="M26 6 7 17l19 11" fill="none" strokeWidth="3" />
          <circle cx="6" cy="17" r="5.500" /><circle cx="26" cy="6" r="5" /><circle cx="26" cy="28" r="5" />
        </svg>
        Share
      </button>
      <button aria-label="Magnet" className="ml-1.5">
        <svg width="48" height="50" viewBox="0 0 48 50">
          <path d="M5 20v-5q0-6 6-6t6 6v5M5 31v5q0 6 6 6t6-6v-5" fill="none" stroke="#555" strokeWidth="9" strokeLinecap="round" />
          <path d="M5 20v-5q0-6 6-6t6 6v5M5 31v5q0 6 6 6t6-6v-5" fill="none" stroke="#e8e8e8" strokeWidth="6" />
          <path d="M10 8h6v8h-6z" fill="#f88" />
          <path d="M19 0v14" stroke="#6f6" strokeWidth="1.500" /><path d="M16 3h6v9h-6z" fill="#3fc83f" />
          <path d="M30 40h16l-8 7z" fill="#ddd" />
        </svg>
      </button>
      <button aria-label="Order list" className="ml-[16px]">
        <svg width="30" height="36" viewBox="0 0 30 36">
          <path d="M1 1h28v34H1z" fill="#3b4650" stroke="#7d8891" strokeWidth="2" />
          <path d="M4 4h8l4 4H4zM4 11h15l4 4H4zM4 18h10l4 4H4zM9 19l4 4h12v-4zM13 25l4 4h8v-4z" fill="#aab4bc" />
          <path d="M13 2 27 16" stroke="#7d8891" strokeWidth="1.500" />
          <path d="M17 2h11l-5 7z" fill="#f44" /><path d="M2 33h12l-7-7z" fill="#12c512" />
        </svg>
      </button>
      <button aria-label="Order book" className="ml-6">
        <svg width="36" height="38" viewBox="0 0 36 38">
          <path d="M0 1h29v7h7v7h-6v8h6v7h-8v8H0v-9h9v-6H4v-6h5V9H0z" fill="#bbb" />
          <path d="M2 3h16v4H2zM10 10h8v4h-8zM5 17h13v4H5zM12 24h6v4h-6zM2 31h16v4H2z" fill="#10b810" />
          <path d="M21 3h6v4h-6zM21 10h13v4H21zM21 17h4v4h-4zM21 24h13v4H21zM21 31h4v4h-4z" fill="#ff4848" />
        </svg>
      </button>
      <div className="ml-[10px] flex h-[36px] flex-1 rounded-sm border-2 border-[#4a4a4a] bg-[#060606]">
        <button aria-label="Scroll left" className="flex w-[34px] items-center justify-center border-r border-[#4a4a4a] bg-linear-to-b from-[#2c2c2c] to-[#0e0e0e]">
          <svg width="10" height="20" viewBox="0 0 10 20"><path d="M10 0v20L0 10z" fill="#eee" /></svg>
        </button>
        <div className="w-[58px]" />
        <div className="flex flex-1 items-center justify-center border-x border-[#4a4a4a] bg-linear-to-b from-[#262626] to-[#0c0c0c]">
          <svg width="6" height="6" viewBox="0 0 6 6"><path d="M0 .5h6M0 2.500h6M0 4.500h6" stroke="#777" /></svg>
        </div>
        <button aria-label="Scroll right" className="flex w-[34px] items-center justify-center bg-linear-to-b from-[#2c2c2c] to-[#0e0e0e]">
          <svg width="10" height="20" viewBox="0 0 10 20"><path d="M0 0v20l10-10z" fill="#eee" /></svg>
        </button>
      </div>
      <button aria-label="Chart settings" className="ml-[11px]">
        <svg width="36" height="46" viewBox="0 0 36 46">
          <path d="M26 0v46M8 18v28" stroke="#ddd" strokeWidth="2" />
          <path d="M19 6h14v35H19z" fill="#0b0" stroke="#ddd" strokeWidth="2" />
          <path d="M1 24h14v17H1z" fill="#f44" stroke="#ddd" strokeWidth="2" />
          <path d="m4 33 12-12q0-7 6-10v8l3 2 6-3q0 8-9 9L10 38q-6 1-6-5z" fill="#ddd" stroke="#000" strokeWidth="2" />
        </svg>
      </button>
      <button aria-label="Zoom to fit" className="ml-[18px]">
        <Lens plain>
          <path d="M37 2v22m-4-18 4-5 4 5m-8 15 4 5 4-5M2 36h16M6 32l-5 4 5 4m8-8 5 4-5 4" stroke={CYAN} strokeWidth="2.500" fill="none" />
        </Lens>
      </button>
      <button aria-label="Zoom out" className="ml-[14px]"><Lens><path d="M9 15h13" stroke={CYAN} strokeWidth="5" /></Lens></button>
      <button aria-label="Zoom in" className="ml-[14px] mr-[3px]"><Lens><path d="M8 15h14M15 8v14" stroke={CYAN} strokeWidth="5" /></Lens></button>
      <svg width="101" height="13" viewBox="0 0 101 13" className="absolute right-[526px] bottom-0">
        <path d="M0 13V3q0-3 3-3h95q3 0 3 3v10z" fill="#3d7fdb" />
        <path d="M6 8h58" stroke="#9fe4ff" strokeWidth="11" strokeDasharray="5 1" />
        <path d="M66 8h30" stroke="#7fa6ea" strokeWidth="11" strokeDasharray="5 1" />
      </svg>
    </footer>
  );
}

function Gradients() {
  const stops: [string, string, string][] = [
    ['sell', '#7c4220', '#685520'],
    ['buy', '#3b4b6e', '#3b5c60'],
    ['tag', '#b8f8b8', '#8fce8f'],
    ['dark', '#333', '#000'],
    ['steel', '#e8edf0', '#8a949c'],
    ['pointer', '#3f4850', '#cfd6db'],
    ['bell', '#fff', '#aebfd8'],
    ['redglow', '#3c0c0c', '#1a0c0c'],
  ];
  return (
    <svg width="0" height="0" className="absolute">
      <defs>
        {stops.map(([id, from, to]) => (
          <linearGradient key={id} id={id} x1="0" x2="0" y1="0" y2="1">
            <stop stopColor={from} /><stop offset="1" stopColor={to} />
          </linearGradient>
        ))}
        <linearGradient id="glow" x1="0" x2="0" y1="0" y2="1">
          <stop stopColor="#143c14" stopOpacity="0" />
          <stop offset=".5" stopColor="#184018" stopOpacity=".65" />
          <stop offset="1" stopColor="#143c14" stopOpacity="0" />
        </linearGradient>
        <radialGradient id="lens" cx=".35" cy=".35">
          <stop stopColor="#8b98a6" /><stop offset="1" stopColor="#3c4650" />
        </radialGradient>
      </defs>
    </svg>
  );
}

export default function App() {
  return (
    <main className={`overflow-hidden bg-[#1e1e1e] ${FONT}`}>
      <Gradients />
      <TitleBar />
      <div className="border-l-[3px] border-[#777] pl-[2px]">
        <Toolbar />
        <EquityChart />
        <PositionsChart />
        <PriceChart />
        <DateAxis />
        <BottomBar />
      </div>
    </main>
  );
}
